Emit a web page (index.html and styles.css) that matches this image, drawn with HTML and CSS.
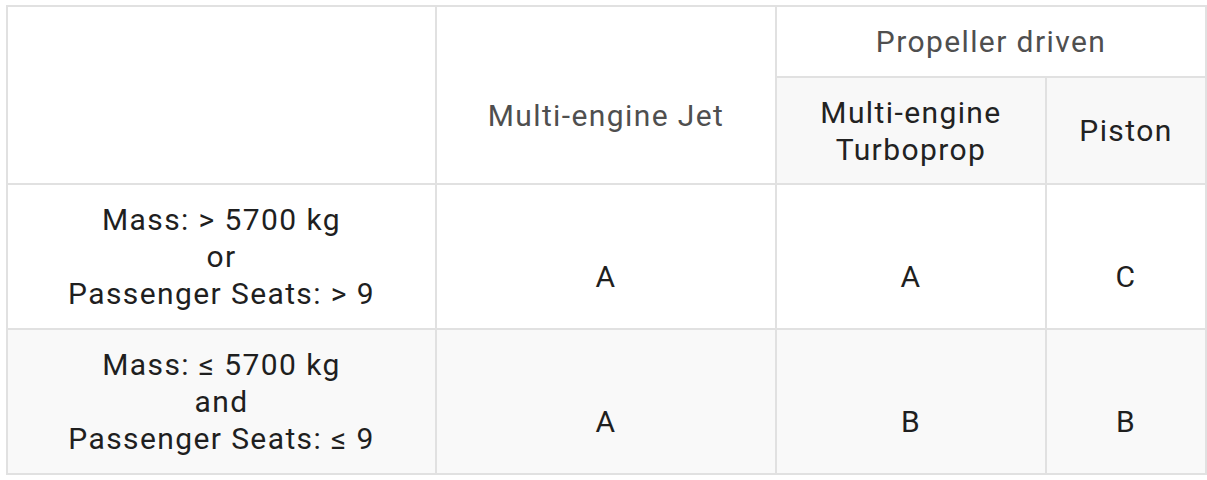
FILE: index.html
```html
<!DOCTYPE html>
<html>
<head>
<meta charset="utf-8">
<link rel="stylesheet" href="styles.css">
</head>
<body>
<table class="grid">
  <colgroup>
    <col class="c1"><col class="c2"><col class="c3"><col class="c4">
  </colgroup>
  <thead>
    <tr class="h1">
      <th rowspan="2" class="blank"></th>
      <th rowspan="2" class="muted low">Multi-engine Jet</th>
      <th colspan="2" class="muted">Propeller driven</th>
    </tr>
    <tr class="h2">
      <th class="shade">Multi-engine<br>Turboprop</th>
      <th class="shade">Piston</th>
    </tr>
  </thead>
  <tbody>
    <tr>
      <td class="cond">Mass: &gt; 5700 kg<br>or<br>Passenger Seats: &gt; 9</td>
      <td class="low">A</td>
      <td class="low">A</td>
      <td class="low">C</td>
    </tr>
    <tr class="alt">
      <td class="cond">Mass: ≤ 5700 kg<br>and<br>Passenger Seats: ≤ 9</td>
      <td class="low">A</td>
      <td class="low">B</td>
      <td class="low">B</td>
    </tr>
  </tbody>
</table>
</body>
</html>
```
FILE: styles.css
```css
html, body {
  margin: 0;
  background: #ffffff;
}
body {
  padding: 5px 0 0 6px;
  font-family: Roboto, "Liberation Sans", sans-serif;
}
.grid {
  border-collapse: collapse;
  table-layout: fixed;
  width: 1201px;
  font-size: 30px;
  letter-spacing: 1.4px;
  line-height: 37px;
  color: #1f1f1f;
}
.c1 { width: 429px; }
.c2 { width: 340px; }
.c3 { width: 270px; }
.c4 { width: 160px; }
.grid th, .grid td {
  border: 2px solid #e1e1e1;
  text-align: center;
  vertical-align: middle;
  font-weight: 400;
  padding: 0;
}
.h1 { height: 71px; }
.h2 { height: 107px; }
.grid tbody tr { height: 145px; }
.cond { padding-top: 4px; }
.muted { color: #4f4f4f; }
.shade { background: #f8f8f8; color: #222222; }
.alt td { background: #f9f9f9; }
.low { padding-top: 40px !important; }
```
